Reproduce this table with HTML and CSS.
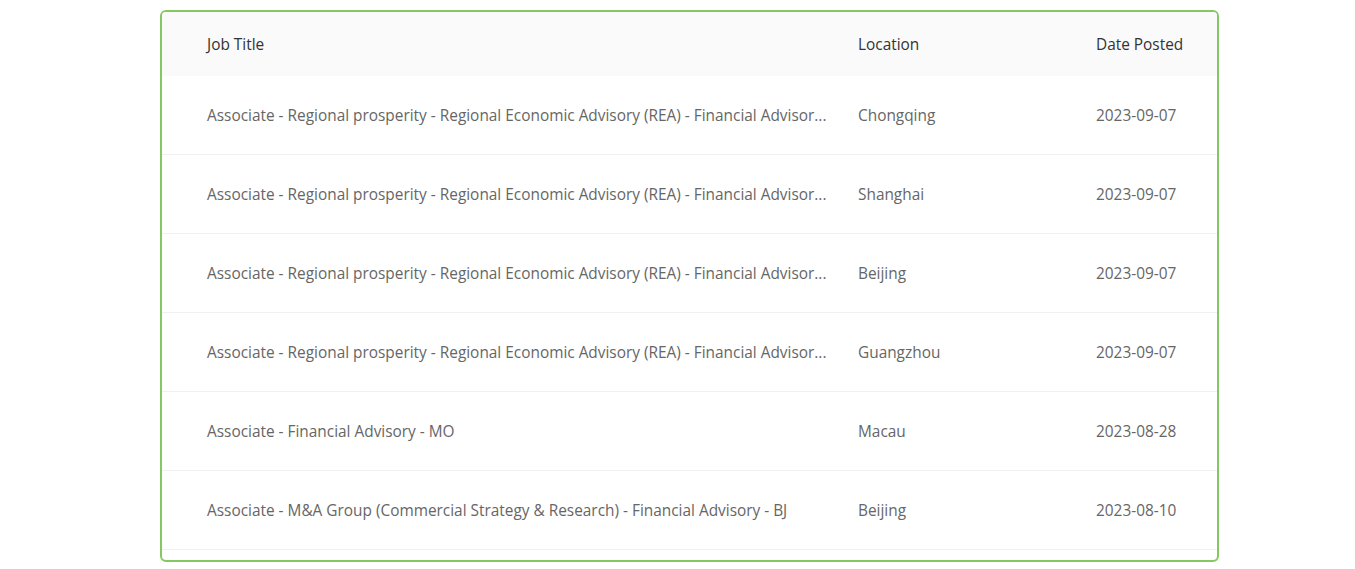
FILE: index.html
```html
<!DOCTYPE html>
<html>
<head>
<meta charset="utf-8">
<link rel="stylesheet" href="styles.css">
</head>
<body>
<div class="card">
  <table class="jobs">
    <colgroup>
      <col class="c-title">
      <col class="c-loc">
      <col class="c-date">
    </colgroup>
    <thead>
      <tr><th class="t">Job Title</th><th>Location</th><th>Date Posted</th></tr>
    </thead>
    <tbody>
      <tr><td class="t">Associate - Regional prosperity - Regional Economic Advisory (REA) - Financial Advisor...</td><td>Chongqing</td><td>2023-09-07</td></tr>
      <tr><td class="t">Associate - Regional prosperity - Regional Economic Advisory (REA) - Financial Advisor...</td><td>Shanghai</td><td>2023-09-07</td></tr>
      <tr><td class="t">Associate - Regional prosperity - Regional Economic Advisory (REA) - Financial Advisor...</td><td>Beijing</td><td>2023-09-07</td></tr>
      <tr><td class="t">Associate - Regional prosperity - Regional Economic Advisory (REA) - Financial Advisor...</td><td>Guangzhou</td><td>2023-09-07</td></tr>
      <tr><td class="t">Associate - Financial Advisory - MO</td><td>Macau</td><td>2023-08-28</td></tr>
      <tr><td class="t">Associate - M&amp;A Group (Commercial Strategy &amp; Research) - Financial Advisory - BJ</td><td>Beijing</td><td>2023-08-10</td></tr>
    </tbody>
  </table>
</div>
</body>
</html>
```
FILE: styles.css
```css
html, body {
  margin: 0;
  padding: 0;
  background: #fff;
}
body {
  font-family: "Open Sans", "Noto Sans", sans-serif;
  font-size: 15.4px;
  padding: 10px 0 0 160px;
}
.card {
  width: 1055px;
  height: 548px;
  border: 2px solid #85c760;
  border-radius: 6px;
  overflow: hidden;
}
.jobs {
  width: 100%;
  border-collapse: collapse;
  table-layout: fixed;
}
.c-title { width: 680px; }
.c-loc { width: 238px; }
.c-date { width: 137px; }
.jobs th {
  background: #fafafa;
  color: #333;
  font-weight: 400;
  text-align: left;
  height: 64px;
  padding: 0 16px;
  white-space: nowrap;
}
.jobs td {
  color: #666;
  height: 78px;
  padding: 0 16px;
  border-bottom: 1px solid #f0f0f0;
  white-space: nowrap;
}
.jobs .t {
  padding-left: 45px;
}
```
